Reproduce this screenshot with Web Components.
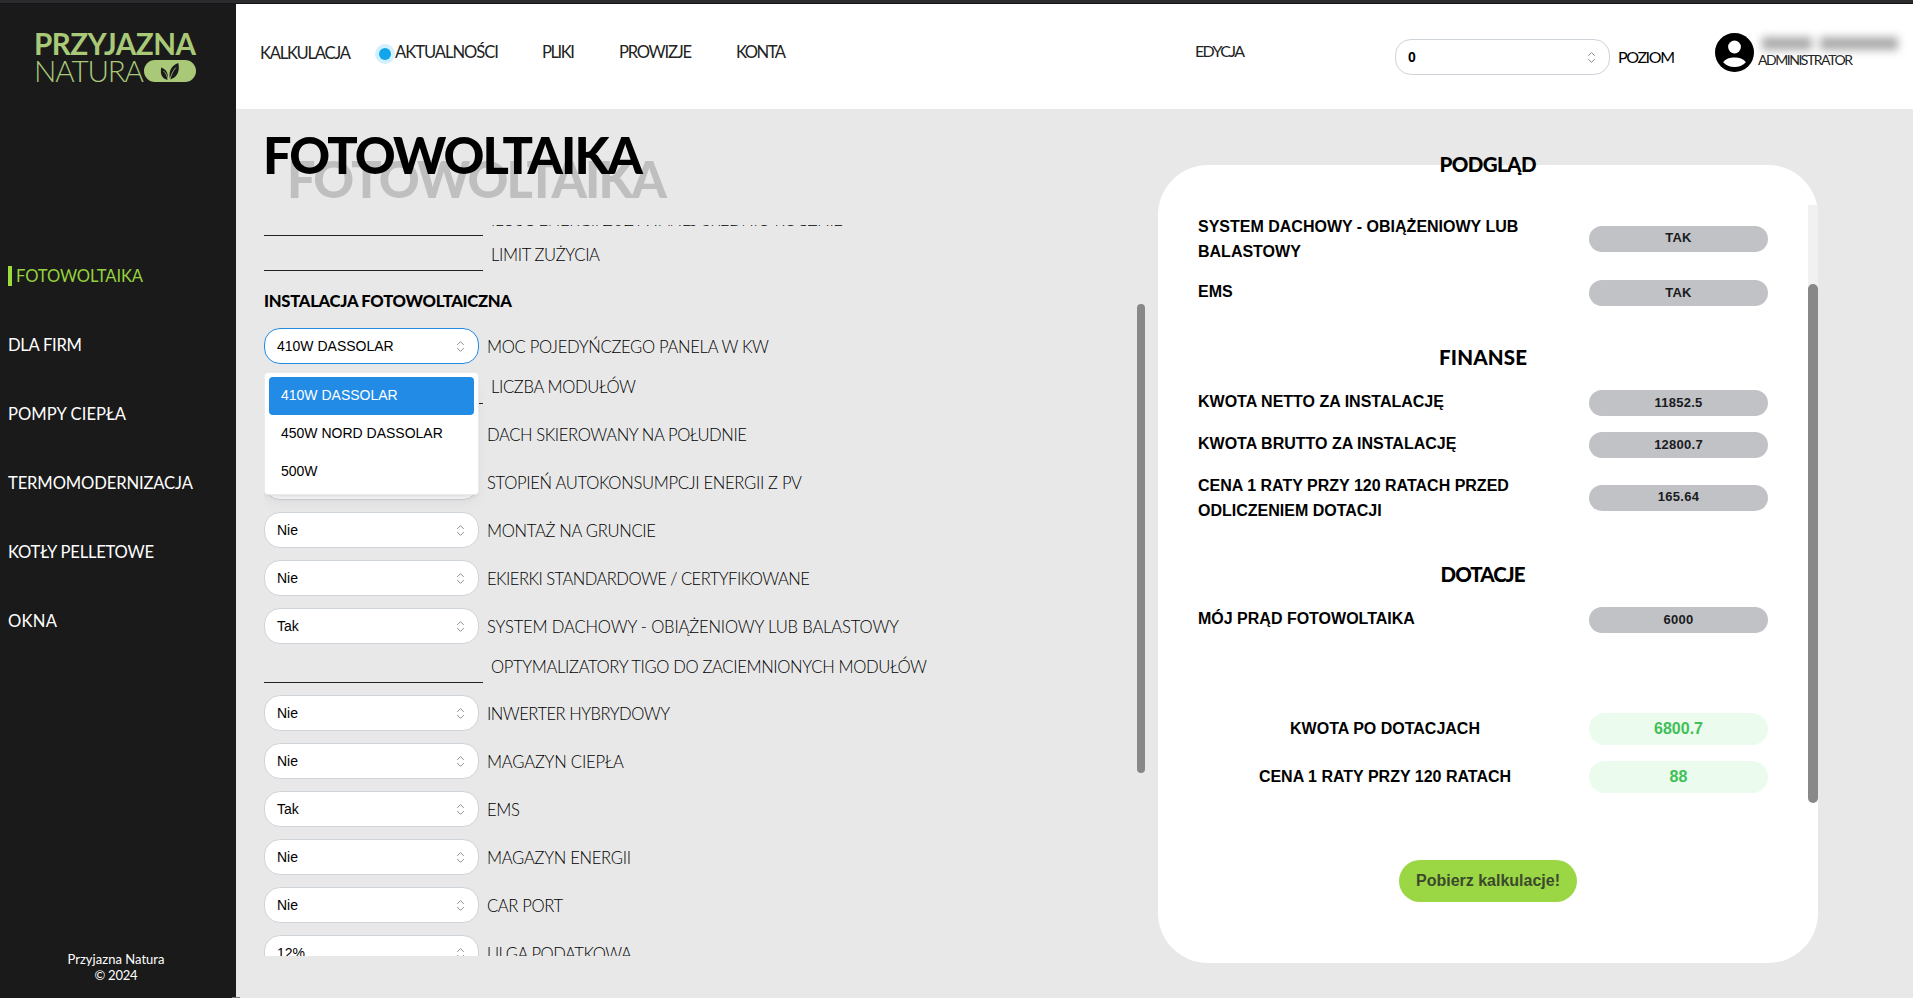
<!DOCTYPE html>
<html lang="pl">
<head>
<meta charset="utf-8">
<title>Przyjazna Natura</title>
<style>
html,body{margin:0;height:100%;overflow:hidden;background:#e8e8e8;font-family:Lato,"Liberation Sans",sans-serif}
</style>
</head>
<body>
<pn-app></pn-app>
<script>
const define = (name, html, after) => {
  const t = document.createElement('template');
  t.innerHTML = html;
  customElements.define(name, class extends HTMLElement {
    connectedCallback() {
      if (this.shadowRoot) return;
      this.attachShadow({mode: 'open'}).append(t.content.cloneNode(true));
      if (after) after(this, this.shadowRoot);
    }
  });
};

/* text run tracked to a given width */
define('pn-text', `<style>
:host{display:block;white-space:nowrap;flex:none;line-height:1.2}
span{display:inline-block}
</style><span><slot></slot></span>`, (host, root) => {
  const a = n => host.getAttribute(n);
  if (a('size')) host.style.fontSize = a('size') + 'px';
  if (a('weight')) host.style.fontWeight = a('weight');
  const w = +a('w');
  if (!w) return;
  const span = root.querySelector('span');
  const n = host.textContent.length;
  const nat = span.getBoundingClientRect().width;
  host.style.letterSpacing = ((w - nat) / (n - 1)).toFixed(3) + 'px';
  host.style.width = w + 'px';
});

define('pn-select', `<style>
:host{display:flex;position:relative;box-sizing:border-box;width:215px;height:36px;flex:none;align-items:center;justify-content:space-between;padding:0 10px 0 12px;background:#fff;border:1px solid #ced4da;border-radius:16px;font:14px "Liberation Sans",Arial,sans-serif;color:#000}
:host([open]){border-color:#228be6}
:host([strong]){font-weight:700}
</style><slot></slot><slot name="menu"></slot>
<svg width="15" height="15" viewBox="0 0 15 15" fill="none" stroke="#868e96" stroke-width="1" stroke-linecap="round" stroke-linejoin="round"><path d="M4.5 5.6 7.5 2.6 10.5 5.6M4.5 9.4 7.5 12.4 10.5 9.4"/></svg>`);

define('pn-menu', `<style>
:host{position:absolute;z-index:5;left:-1px;top:43px;box-sizing:border-box;width:215px;height:123px;padding:4px;background:#fff;border:1px solid #e9ecef;border-radius:4px;box-shadow:0 1px 3px rgba(0,0,0,.05),0 10px 15px -5px rgba(0,0,0,.07),0 7px 7px -5px rgba(0,0,0,.06)}
</style><slot></slot>`);
define('pn-option', `<style>
:host{display:flex;align-items:center;height:38px;box-sizing:border-box;padding:0 0 2px 12px;border-radius:4px;color:#000}
:host([selected]){background:#228be6;color:#fff}
</style><slot></slot>`);

/* form row: a select or an underlined input, followed by its label */
define('pn-row', `<style>
:host{display:flex;align-items:center;height:36px;margin-bottom:12px;gap:8px;font-size:16.6px;font-weight:300;color:#000}
:host([line]){box-sizing:border-box}
.in{width:219px;align-self:stretch;box-sizing:border-box;border-bottom:1px solid #222;flex:none}
.lab{padding-top:var(--drop,3px)}
</style><slot name="field"></slot><div class="lab"><slot></slot></div>`, (host, root) => {
  if (host.hasAttribute('line')) {
    const d = document.createElement('div');
    d.className = 'in';
    root.querySelector('slot').replaceWith(d);
    host.style.height = host.getAttribute('line') + 'px';
  }
});

define('pn-logo', `<style>
:host{display:block;width:162px;color:#a9c979}
.b{display:flex;height:51px;flex-direction:column}
.r{display:flex;align-items:center;height:28px;margin-top:-1px}
i{width:52px;height:22px;border-radius:11px;background:#a9c979;display:grid;place-items:center;flex:none}
</style><div class="b"><pn-text size="29.6" weight="700" w="162" style="height:28px;line-height:28px">PRZYJAZNA</pn-text>
<div class="r"><pn-text size="29.6" weight="300" w="110">NATURA</pn-text><i>
<svg width="20" height="19" viewBox="0 0 20 19" fill="#1a1a1a"><path d="M7.8 18C2 16.500 0 12.500 1.200 5.500 6 7.200 8.700 11 7.800 18ZM10 17.500C8.300 9 11.500 3.500 18.300 1 20 9 17.500 15.500 10 17.500Z"/><path d="M8 18C7.500 14 5.500 10.500 3.500 9M9.800 18C11 13 13 8.500 16 5.500" stroke="#a9c979" stroke-width=".8" fill="none"/></svg></i></div></div>`);

define('pn-side', `<style>
:host{display:flex;flex-direction:column;box-sizing:border-box;width:236px;height:100%;background:#1a1a1a;color:#fff}
pn-logo{margin:26px 0 0 34px;height:151px}
nav{display:flex;flex-direction:column;padding:60px 0 0 8px;font-size:16.6px}
a{display:flex;align-items:center;height:69px}
a pn-text{padding-top:2px}
.on{color:#95d13c}
.on::before{content:"";width:4px;height:20px;background:#9cdc3c;margin-right:4px}
footer{margin-top:auto;padding-bottom:15px;display:flex;flex-direction:column;align-items:center;padding-right:4px}
footer pn-text{height:16px;line-height:16px}
</style><pn-logo></pn-logo><nav>
<a class="on"><pn-text w="127">FOTOWOLTAIKA</pn-text></a>
<a><pn-text w="74">DLA FIRM</pn-text></a>
<a><pn-text w="118">POMPY CIEPŁA</pn-text></a>
<a><pn-text w="185">TERMOMODERNIZACJA</pn-text></a>
<a><pn-text w="146">KOTŁY PELLETOWE</pn-text></a>
<a><pn-text w="49">OKNA</pn-text></a></nav>
<footer><pn-text size="13" w="97">Przyjazna Natura</pn-text><pn-text size="13" w="43">© 2024</pn-text></footer>`);

define('pn-header', `<style>
:host{display:flex;align-items:flex-start;height:105px;background:#fff;color:#222;font-size:16.6px}
nav{display:flex;padding:39px 0 0 24px;width:935px;box-sizing:border-box}
.dot{width:12px;height:12px;border-radius:50%;background:#12a5ea;box-shadow:0 0 0 4px #d2f0fd;margin:4.500px 4px 0 28px}
.poz{display:flex;align-items:center;gap:8px;margin:35px 0 0 150px;color:#000}
.user{display:flex;gap:4px;margin:29px 0 0 40px}
.who{display:flex;flex-direction:column;width:148px}
.name{display:flex;gap:8px;padding:4px 0 0 4px;height:16px;filter:blur(4px)}
.name b{height:13px;background:#aaa}
</style>
<nav><pn-text w="91" style="margin-top:1px">KALKULACJA</pn-text><span class="dot"></span>
<pn-text w="104">AKTUALNOŚCI</pn-text>
<pn-text w="33" style="margin-left:43px">PLIKI</pn-text>
<pn-text w="73" style="margin-left:44px">PROWIZJE</pn-text>
<pn-text w="50" style="margin-left:44px">KONTA</pn-text></nav>
<pn-text w="50" size="16" style="margin:37px 0 0 24px">EDYCJA</pn-text>
<div class="poz"><pn-select strong>0</pn-select><pn-text w="57" size="16">POZIOM</pn-text></div>
<div class="user"><svg width="39" height="39" viewBox="0 0 39 39"><circle cx="19.500" cy="19.500" r="19.500"/><circle cx="19.500" cy="14" r="6.400" fill="#fff"/><path d="M8.200 29.200C10.500 25.800 15 24.500 19.500 24.500S28.500 25.800 30.800 29.200C28.300 32.200 24.300 34 19.500 34S10.700 32.200 8.200 29.200Z" fill="#fff"/></svg>
<div class="who"><div class="name"><b style="width:50px"></b><b style="width:78px"></b></div><pn-text w="95" size="14" style="margin-top:-1.5px">ADMINISTRATOR</pn-text></div></div>`);

define('pn-form', `<style>
:host{display:block;width:909px}
h1{margin:15px 0 0 27px;height:62px;color:#000;text-shadow:24px 24px 0 #bfbfbf}
h1 pn-text{line-height:62px}
.wrap{display:flex;justify-content:space-between;margin-top:39px}
.list{height:731px;overflow:hidden;width:840px}
.rows{margin-top:-24px}
h2{margin:0;height:57px;display:flex;align-items:center;font-size:16.600px}
.bar{width:8px;height:469px;margin:79px 0 0;border-radius:4px;background:#888;flex:none}
</style><h1><pn-text size="50.500" weight="900" w="380">FOTOWOLTAIKA</pn-text></h1>
<div class="wrap"><div class="list" style="margin-left:28px"><div class="rows">
<pn-row line="35" style="margin:0;--drop:4px"><pn-text w="352">ILOŚĆ ENERGII ZUŻYWANEJ ŚREDNIO ROCZNIE</pn-text></pn-row>
<pn-row line="35" style="margin:0;--drop:4px"><pn-text w="109">LIMIT ZUŻYCIA</pn-text></pn-row>
<h2><pn-text weight="900" w="248" style="padding-top:4px">INSTALACJA FOTOWOLTAICZNA</pn-text></h2>
<pn-row style="margin:0"><pn-select slot="field" open>410W DASSOLAR<pn-menu slot="menu"><pn-option selected>410W DASSOLAR</pn-option><pn-option>450W NORD DASSOLAR</pn-option><pn-option>500W</pn-option></pn-menu></pn-select><pn-text w="282">MOC POJEDYŃCZEGO PANELA W KW</pn-text></pn-row>
<pn-row line="40" style="--drop:7px"><pn-text w="145">LICZBA MODUŁÓW</pn-text></pn-row>
<pn-row><pn-select slot="field"></pn-select><pn-text w="260">DACH SKIEROWANY NA POŁUDNIE</pn-text></pn-row>
<pn-row><pn-select slot="field"></pn-select><pn-text w="315">STOPIEŃ AUTOKONSUMPCJI ENERGII Z PV</pn-text></pn-row>
<pn-row><pn-select slot="field">Nie</pn-select><pn-text w="169">MONTAŻ NA GRUNCIE</pn-text></pn-row>
<pn-row><pn-select slot="field">Nie</pn-select><pn-text w="323">EKIERKI STANDARDOWE / CERTYFIKOWANE</pn-text></pn-row>
<pn-row style="margin:0"><pn-select slot="field">Tak</pn-select><pn-text w="412">SYSTEM DACHOWY - OBIĄŻENIOWY LUB BALASTOWY</pn-text></pn-row>
<pn-row line="39" style="--drop:8px"><pn-text w="436">OPTYMALIZATORY TIGO DO ZACIEMNIONYCH MODUŁÓW</pn-text></pn-row>
<pn-row><pn-select slot="field">Nie</pn-select><pn-text w="183">INWERTER HYBRYDOWY</pn-text></pn-row>
<pn-row><pn-select slot="field">Nie</pn-select><pn-text w="137">MAGAZYN CIEPŁA</pn-text></pn-row>
<pn-row><pn-select slot="field">Tak</pn-select><pn-text w="33">EMS</pn-text></pn-row>
<pn-row><pn-select slot="field">Nie</pn-select><pn-text w="144">MAGAZYN ENERGII</pn-text></pn-row>
<pn-row><pn-select slot="field">Nie</pn-select><pn-text w="76">CAR PORT</pn-text></pn-row>
<pn-row><pn-select slot="field">12%</pn-select><pn-text w="145">ULGA PODATKOWA</pn-text></pn-row>
</div></div><div class="bar"></div></div>`);

/* summary line with a value pill */
define('pn-value', `<style>
:host{display:flex;align-items:center;justify-content:space-between;height:26px;margin-bottom:16px;font:700 16px/24.800px "Liberation Sans",Arial,sans-serif;color:#000}
:host([tall]){height:50px}
:host([green]){height:32px}
.t{width:374px;padding-bottom:2px;white-space:pre-line}
:host([tall]) .t{margin-top:8px}
:host([green]) .t{text-align:center;padding-bottom:0}
.p{width:179px;height:26px;border-radius:16px;background:#c1c2c5;display:flex;align-items:center;justify-content:center;font-size:13px;letter-spacing:.25px;color:#1a1b1e;flex:none}
:host([tall]) .p{margin-top:3px}
:host([green]) .p{height:32px;background:#ebfbee;color:#40c057;font-size:16px;letter-spacing:0}
</style><div class="t"><slot></slot></div><div class="p"></div>`, (host, root) => {
  root.querySelector('.p').textContent = host.getAttribute('value');
});

define('pn-preview', `<style>
:host{display:block;width:660px;height:798px;margin:56px 0 0 13px;border-radius:50px;background:#fff;flex:none}
.ttl{display:flex;justify-content:center;font-size:20.500px;font-weight:900;color:#000}
.ttl pn-text{line-height:26px}
.top{margin-top:-14px;margin-bottom:28px}
.scroll{display:flex;justify-content:space-between;height:598px}
.body{width:570px;padding:7px 0 0 40px}
.track{width:10px;background:#f1f1f1;height:90px;flex:none}
.track i{display:block;height:519px;margin-top:79px;border-radius:5px;background:#888}
button{display:block;margin:57px auto 0 241px;width:178px;height:42px;border:0;border-radius:21px;background:#9bd645;color:#3c4a2c;font:700 16px "Liberation Sans",Arial,sans-serif;padding:0 0 1px}
.h{margin-top:-1px;margin-bottom:20px}
</style><div class="ttl top"><pn-text w="97">PODGLĄD</pn-text></div>
<div class="scroll"><div class="body">
<pn-value tall value="TAK" style="margin-bottom:18px">SYSTEM DACHOWY - OBIĄŻENIOWY LUB
BALASTOWY</pn-value>
<pn-value value="TAK" style="margin-bottom:39px">EMS</pn-value>
<div class="ttl h"><pn-text w="88">FINANSE</pn-text></div>
<pn-value value="11852.5">KWOTA NETTO ZA INSTALACJĘ</pn-value>
<pn-value value="12800.7" style="margin-bottom:13px">KWOTA BRUTTO ZA INSTALACJĘ</pn-value>
<pn-value tall value="165.64" style="margin-bottom:41px">CENA 1 RATY PRZY 120 RATACH PRZED
ODLICZENIEM DOTACJI</pn-value>
<div class="ttl h"><pn-text w="85">DOTACJE</pn-text></div>
<pn-value value="6000" style="margin-bottom:80px">MÓJ PRĄD FOTOWOLTAIKA</pn-value>
<pn-value green value="6800.7">KWOTA PO DOTACJACH</pn-value>
<pn-value green value="88">CENA 1 RATY PRZY 120 RATACH</pn-value>
</div><div class="track"><i></i></div></div>
<button>Pobierz kalkulacje!</button>`);

define('pn-app', `<style>
:host{display:flex;flex-direction:column;height:998px;width:1913px;background:#e8e8e8}
.strip{height:3px;background:#2b2b2d;border-bottom:1px solid #161618;flex:none}
.cols{display:flex;height:994px}
.main{width:1677px}
.content{display:flex}
.tip{position:absolute;left:232px;top:997px;width:8px;height:1px;background:#777}
</style><div class="strip"></div><div class="cols"><pn-side></pn-side><div class="main"><pn-header></pn-header><div class="content"><pn-form></pn-form><pn-preview></pn-preview></div></div></div><div class="tip"></div>`);
</script>
</body>
</html>
